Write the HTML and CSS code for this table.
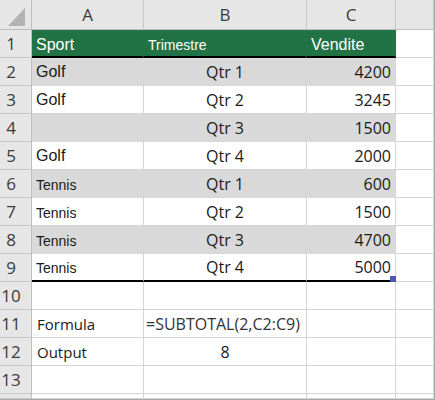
FILE: index.html
```html
<!DOCTYPE html>
<html lang="it">
<head>
    <meta charset="UTF-8">
    <title>Foglio - SUBTOTALE</title>
    <link rel="stylesheet" href="styles.css">
</head>
<body>
    <div class="sheet">
        <!-- intestazioni colonne -->
        <div class="corner">
            <svg width="31" height="29" viewBox="0 0 31 29"><polygon points="25,8 25,26 8,26" fill="#b3b3b3"/></svg>
        </div>
        <div class="col-head">A</div>
        <div class="col-head">B</div>
        <div class="col-head">C</div>
        <div class="col-head"></div>

        <!-- riga 1: intestazione tabella -->
        <div class="row-head">1</div>
        <div class="cell head big">Sport</div>
        <div class="cell head small">Trimestre</div>
        <div class="cell head big">Vendite</div>
        <div class="cell"></div>

        <div class="row-head">2</div>
        <div class="cell band golf">Golf</div>
        <div class="cell band mid">Qtr 1</div>
        <div class="cell band num">4200</div>
        <div class="cell"></div>

        <div class="row-head">3</div>
        <div class="cell golf">Golf</div>
        <div class="cell mid">Qtr 2</div>
        <div class="cell num">3245</div>
        <div class="cell"></div>

        <div class="row-head">4</div>
        <div class="cell band"></div>
        <div class="cell band mid">Qtr 3</div>
        <div class="cell band num">1500</div>
        <div class="cell"></div>

        <div class="row-head">5</div>
        <div class="cell golf">Golf</div>
        <div class="cell mid">Qtr 4</div>
        <div class="cell num">2000</div>
        <div class="cell"></div>

        <div class="row-head">6</div>
        <div class="cell band tennis">Tennis</div>
        <div class="cell band mid">Qtr 1</div>
        <div class="cell band num">600</div>
        <div class="cell"></div>

        <div class="row-head">7</div>
        <div class="cell tennis">Tennis</div>
        <div class="cell mid">Qtr 2</div>
        <div class="cell num">1500</div>
        <div class="cell"></div>

        <div class="row-head">8</div>
        <div class="cell band tennis">Tennis</div>
        <div class="cell band mid">Qtr 3</div>
        <div class="cell band num">4700</div>
        <div class="cell"></div>

        <div class="row-head">9</div>
        <div class="cell last tennis">Tennis</div>
        <div class="cell last mid">Qtr 4</div>
        <div class="cell last num">5000<span class="handle"></span></div>
        <div class="cell"></div>

        <div class="row-head">10</div>
        <div class="cell"></div>
        <div class="cell"></div>
        <div class="cell"></div>
        <div class="cell"></div>

        <div class="row-head">11</div>
        <div class="cell label">Formula</div>
        <div class="cell formula">=SUBTOTAL(2,C2:C9)</div>
        <div class="cell"></div>
        <div class="cell"></div>

        <div class="row-head">12</div>
        <div class="cell label">Output</div>
        <div class="cell mid">8</div>
        <div class="cell"></div>
        <div class="cell"></div>

        <div class="row-head">13</div>
        <div class="cell"></div>
        <div class="cell"></div>
        <div class="cell"></div>
        <div class="cell"></div>

        <div class="row-head"></div>
        <div class="cell"></div>
        <div class="cell"></div>
        <div class="cell"></div>
        <div class="cell"></div>
    </div>
</body>
</html>
```

FILE: styles.css
```css
* {
    margin: 0;
    padding: 0;
    box-sizing: border-box;
}

body {
    background: white;
    font-family: 'Open Sans', 'Liberation Sans', sans-serif;
    color: #222;
}

.sheet {
    display: grid;
    grid-template-columns: 32px 112px 163px 89px 38px;
    grid-template-rows: 30px repeat(13, 28px) 5px;
    width: 435px;
    height: 400px;
    border-right: 1px solid #a8a8a8;
    border-bottom: 1px solid #a8a8a8;
    overflow: hidden;
}

.corner {
    background: #e6e6e6;
    border-right: 1px solid #bdbdbd;
    border-bottom: 1px solid #bdbdbd;
}

.corner svg {
    display: block;
}

.col-head {
    background: #e6e6e6;
    border-right: 1px solid #c6c6c6;
    border-bottom: 1px solid #bdbdbd;
    display: flex;
    align-items: center;
    justify-content: center;
    font-size: 17px;
    color: #3a3a3a;
}

.row-head {
    background: #e6e6e6;
    border-right: 1px solid #bdbdbd;
    border-bottom: 1px solid #c6c6c6;
    display: flex;
    align-items: center;
    justify-content: center;
    padding-right: 9px;
    font-size: 17px;
    color: #3a3a3a;
}

.cell {
    position: relative;
    border-right: 1px solid #d4d4d4;
    border-bottom: 1px solid #d4d4d4;
    display: flex;
    align-items: center;
    padding: 0 4px;
    font-size: 16px;
    color: #1a1a1a;
    white-space: nowrap;
}

.head {
    background: #217346;
    border-right-color: #217346;
    border-bottom: 2px solid #000;
    color: white;
    font-family: 'Liberation Sans', Arial, sans-serif;
    padding-top: 3px;
}

.head.big {
    font-size: 16px;
}

.head.small {
    font-size: 14px;
}

.band {
    background: #d9d9d9;
    border-right-color: #d9d9d9;
    border-bottom-color: #d9d9d9;
}

.last {
    border-bottom: 2px solid #000;
}

.golf {
    font-family: 'Liberation Sans', Arial, sans-serif;
    font-size: 16px;
}

.tennis {
    font-family: 'Liberation Sans', Arial, sans-serif;
    font-size: 14px;
    padding-top: 2px;
}

.mid {
    justify-content: center;
}

.num {
    justify-content: flex-end;
}

.label {
    padding-left: 5px;
    font-size: 15px;
}

.formula {
    padding-left: 2px;
    color: #333;
}

.handle {
    position: absolute;
    right: -1px;
    bottom: -2px;
    width: 6px;
    height: 6px;
    background: #4a58b8;
}
```
